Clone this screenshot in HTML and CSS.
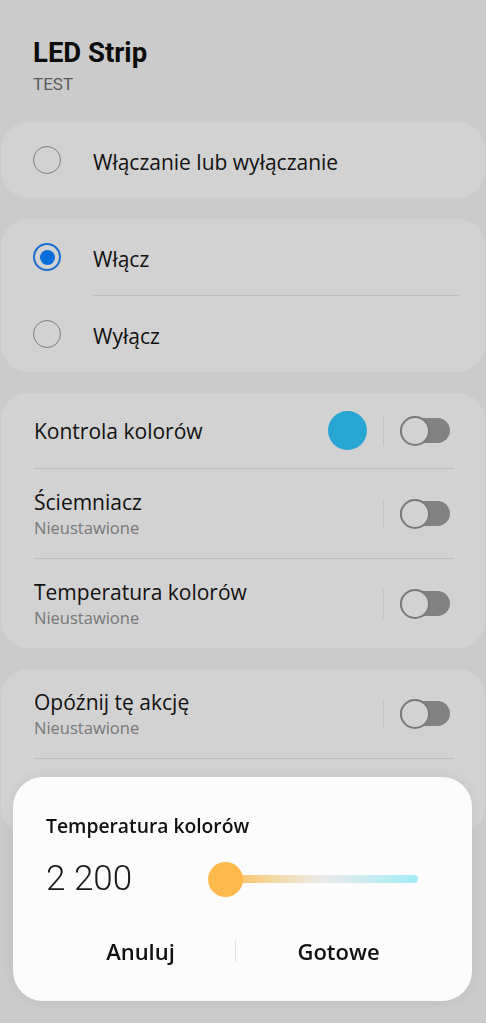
FILE: index.html
```html
<!DOCTYPE html>
<html lang="pl">
<head>
<meta charset="utf-8">
<title>LED Strip</title>
<link rel="stylesheet" href="styles.css">
</head>
<body>
<main class="screen">
  <header class="header">
    <h1 class="h-title">LED Strip</h1>
    <div class="h-sub">TEST</div>
  </header>

  <section class="card">
    <div class="radio-row"><span class="radio"></span><span class="label">Włączanie lub wyłączanie</span></div>
  </section>

  <section class="card">
    <div class="radio-row"><span class="radio on"></span><span class="label">Włącz</span></div>
    <div class="divider radio-div"></div>
    <div class="radio-row"><span class="radio"></span><span class="label">Wyłącz</span></div>
  </section>

  <section class="card">
    <div class="set-row short">
      <div class="texts"><div class="label">Kontrola kolorów</div></div>
      <span class="swatch"></span>
      <span class="vsep"></span>
      <span class="toggle"><span class="knob"></span></span>
    </div>
    <div class="divider"></div>
    <div class="set-row">
      <div class="texts"><div class="label">Ściemniacz</div><div class="hint">Nieustawione</div></div>
      <span class="vsep"></span>
      <span class="toggle"><span class="knob"></span></span>
    </div>
    <div class="divider"></div>
    <div class="set-row">
      <div class="texts"><div class="label">Temperatura kolorów</div><div class="hint">Nieustawione</div></div>
      <span class="vsep"></span>
      <span class="toggle"><span class="knob"></span></span>
    </div>
  </section>

  <section class="card">
    <div class="set-row">
      <div class="texts"><div class="label">Opóźnij tę akcję</div><div class="hint">Nieustawione</div></div>
      <span class="vsep"></span>
      <span class="toggle"><span class="knob"></span></span>
    </div>
    <div class="divider"></div>
    <div class="set-row short"></div>
  </section>
</main>

<div class="dialog">
  <div class="d-title">Temperatura kolorów</div>
  <div class="d-value-row">
    <div class="d-value">2 200</div>
    <div class="slider">
      <span class="thumb"></span>
      <span class="track"></span>
    </div>
  </div>
  <div class="d-buttons">
    <div class="d-btn">Anuluj</div>
    <div class="d-sep"></div>
    <div class="d-btn">Gotowe</div>
  </div>
</div>
</body>
</html>
```

FILE: styles.css
```css
* { box-sizing: border-box; }
html, body {
  margin: 0;
  padding: 0;
  background: #cbcbcb;
  font-family: "Open Sans", Roboto, sans-serif;
  color: #111;
}
body { height: 1023px; overflow: hidden; }

.screen {
  display: flex;
  flex-direction: column;
  gap: 21px;
}

.header {
  padding: 37px 0 7px 33px;
}
.h-title {
  margin: 0;
  font-family: Roboto, "Open Sans", sans-serif;
  font-size: 27.5px;
  line-height: 32px;
  font-weight: 700;
  color: #0c0c0c;
}
.h-sub {
  margin-top: 5px;
  font-family: Roboto, "Open Sans", sans-serif;
  font-size: 17px;
  line-height: 20px;
  color: #5a5a5a;
}

.card {
  margin: 0 1px;
  background: #d2d2d2;
  border-radius: 27px;
  display: flex;
  flex-direction: column;
}

.radio-row {
  height: 76px;
  display: flex;
  align-items: center;
  padding-left: 32px;
  gap: 32px;
}
.radio {
  width: 28px;
  height: 28px;
  border-radius: 50%;
  border: 1.5px solid #7d7d7d;
  display: flex;
  align-items: center;
  justify-content: center;
  flex: none;
}
.radio.on {
  border: 2px solid #1d6fd2;
}
.radio.on::after {
  content: "";
  width: 15px;
  height: 15px;
  border-radius: 50%;
  background: #0a6edc;
}
.label {
  font-size: 21px;
  line-height: 26px;
  color: #111;
}
.radio-row .label { padding-top: 3px; }

.divider {
  height: 1px;
  background: #bdbdbd;
  margin: 0 31px 0 33px;
}
.radio-div {
  margin: 0 26px 0 92px;
}

.set-row {
  height: 89px;
  display: flex;
  align-items: center;
  padding: 0 35px 0 33px;
}
.set-row.short { height: 75px; }
.texts {
  flex: 1;
  display: flex;
  flex-direction: column;
}
.hint {
  font-size: 16.5px;
  line-height: 20px;
  color: #777;
  margin-top: 3px;
}
.swatch {
  width: 39px;
  height: 39px;
  border-radius: 50%;
  background: #27a6d4;
  flex: none;
}
.vsep {
  width: 1px;
  height: 30px;
  background: #c2c2c2;
  margin: 0 16px 0 16px;
  flex: none;
}
.toggle {
  width: 50px;
  height: 25px;
  border-radius: 13px;
  background: #828282;
  display: flex;
  align-items: center;
  flex: none;
}
.knob {
  width: 30px;
  height: 30px;
  flex: none;
  border-radius: 50%;
  border: 2px solid #7a7a7a;
  background: #d2d2d2;
}

.dialog {
  position: fixed;
  left: 13px;
  top: 777px;
  width: 459px;
  height: 224px;
  background: #fcfcfc;
  border-radius: 30px;
  box-shadow: 0 0 14px rgba(0,0,0,0.06);
  padding: 37px 54px 25px 33px;
  display: flex;
  flex-direction: column;
}
.d-title {
  font-size: 19.3px;
  line-height: 24px;
  font-weight: 600;
  color: #111;
}
.d-value-row {
  margin-top: 21px;
  height: 40px;
  display: flex;
  align-items: center;
}
.d-value {
  width: 162px;
  font-family: Roboto, "Open Sans", sans-serif;
  font-size: 35px;
  line-height: 40px;
  font-weight: 300;
  color: #1a1a1a;
}
.slider {
  flex: 1;
  height: 36px;
  display: flex;
  align-items: center;
}
.thumb {
  width: 35px;
  height: 35px;
  border-radius: 50%;
  background: #fdb94c;
  flex: none;
  position: relative;
  z-index: 1;
}
.track {
  flex: 1;
  height: 8px;
  border-radius: 4px;
  margin-left: -18px;
  background: linear-gradient(90deg, #fbbc54 0%, #f5d9a6 25%, #ebebeb 50%, #c7edf2 75%, #a4ebf5 100%);
}
.d-buttons {
  margin-top: 27px;
  height: 50px;
  margin-right: -23px;
  display: grid;
  grid-template-columns: 189px 1px 1fr;
  align-items: center;
}
.d-btn {
  text-align: center;
  font-size: 22px;
  font-weight: 600;
  color: #111;
}
.d-sep {
  height: 22px;
  background: #e2e2e2;
}
```
